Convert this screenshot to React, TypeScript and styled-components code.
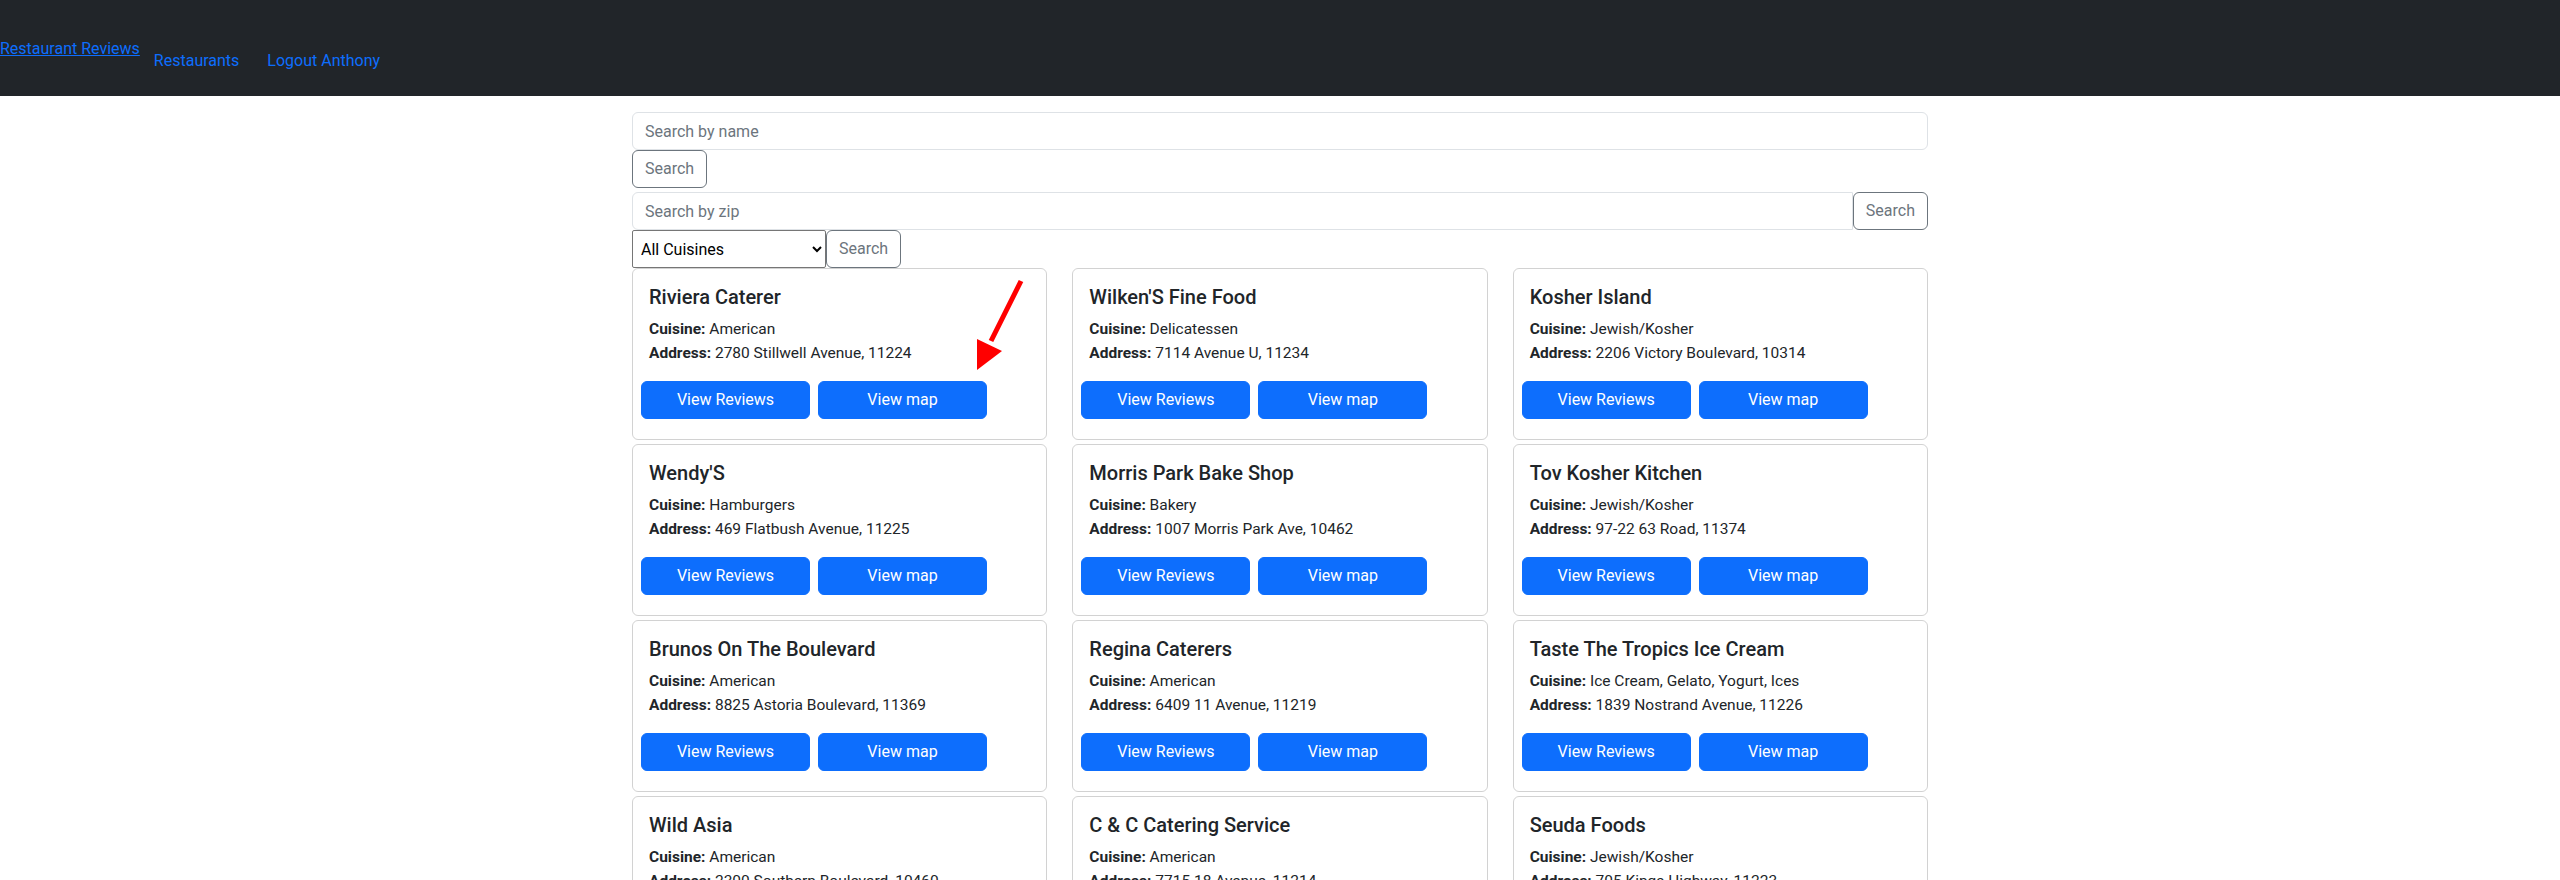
import React from "react";
import styled, { createGlobalStyle } from "styled-components";

const GlobalStyle = createGlobalStyle`
  * { box-sizing: border-box; }
  body {
    margin: 0;
    background: #fff;
    color: #212529;
    font-family: Roboto, "Liberation Sans", Arial, sans-serif;
    font-size: 16px;
    line-height: 1.5;
  }
`;

const Navbar = styled.nav`
  display: flex;
  align-items: flex-start;
  height: 96px;
  padding-top: 37px;
  background: #212529;
`;

const Brand = styled.a`
  color: #0d6efd;
  text-decoration: underline;
  line-height: 24px;
`;

const NavList = styled.div`
  display: flex;
  padding-top: 12px;
`;

const NavLink = styled.a`
  color: #0d6efd;
  text-decoration: none;
  line-height: 24px;
  padding: 0 14px;
`;

const Container = styled.main`
  width: 1320px;
  margin: 0 auto;
  padding: 16px 12px 0;
`;

const Input = styled.input<{ $joined?: boolean }>`
  display: block;
  width: 100%;
  height: 38px;
  padding: 6px 12px;
  font: inherit;
  color: #212529;
  border: 1px solid #dee2e6;
  border-radius: ${(p) => (p.$joined ? "6px 0 0 6px" : "6px")};
  &::placeholder { color: #6c757d; }
`;

const OutlineButton = styled.button`
  height: 38px;
  padding: 6px 12px;
  font: inherit;
  color: #6c757d;
  background: transparent;
  border: 1px solid #6c757d;
  border-radius: 6px;
  flex: none;
`;

const NameSearch = styled.div`
  margin-bottom: 4px;
`;

const InputGroup = styled.div`
  display: flex;
`;

const Select = styled.select`
  width: 194px;
  height: 38px;
  padding: 0 4px;
  font: inherit;
  color: #000;
  background: #fff;
  border: 1px solid #767676;
  border-radius: 2px;
`;

const Grid = styled.div`
  display: grid;
  grid-template-columns: repeat(3, 1fr);
  column-gap: 25px;
  row-gap: 4px;
`;

const Card = styled.div`
  position: relative;
  border: 1px solid rgba(0, 0, 0, 0.175);
  border-radius: 6px;
  padding: 16px 16px 20px;
`;

const Title = styled.h5`
  margin: 0 0 8px;
  font-size: 20px;
  font-weight: 500;
  line-height: 1.2;
`;

const Info = styled.p`
  margin: 0 0 16px;
  font-size: 15.5px;
  line-height: 24px;
`;

const Actions = styled.div`
  display: flex;
  gap: 8px;
  margin-left: -8px;
`;

const PrimaryButton = styled.button`
  width: 169px;
  height: 38px;
  font: inherit;
  color: #fff;
  background: #0d6efd;
  border: 1px solid #0d6efd;
  border-radius: 6px;
`;

const Arrow = styled.svg`
  position: absolute;
  left: 330px;
  top: 0;
  pointer-events: none;
`;

const restaurants = [
  ["Riviera Caterer", "American", "2780 Stillwell Avenue, 11224"],
  ["Wilken'S Fine Food", "Delicatessen", "7114 Avenue U, 11234"],
  ["Kosher Island", "Jewish/Kosher", "2206 Victory Boulevard, 10314"],
  ["Wendy'S", "Hamburgers", "469 Flatbush Avenue, 11225"],
  ["Morris Park Bake Shop", "Bakery", "1007 Morris Park Ave, 10462"],
  ["Tov Kosher Kitchen", "Jewish/Kosher", "97-22 63 Road, 11374"],
  ["Brunos On The Boulevard", "American", "8825 Astoria Boulevard, 11369"],
  ["Regina Caterers", "American", "6409 11 Avenue, 11219"],
  ["Taste The Tropics Ice Cream", "Ice Cream, Gelato, Yogurt, Ices", "1839 Nostrand Avenue, 11226"],
  ["Wild Asia", "American", "2300 Southern Boulevard, 10460"],
  ["C & C Catering Service", "American", "7715 18 Avenue, 11214"],
  ["Seuda Foods", "Jewish/Kosher", "705 Kings Highway, 11223"],
];

export default function App() {
  return (
    <>
      <GlobalStyle />
      <Navbar>
        <Brand href="#">Restaurant Reviews</Brand>
        <NavList>
          <NavLink href="#">Restaurants</NavLink>
          <NavLink href="#">Logout Anthony</NavLink>
        </NavList>
      </Navbar>
      <Container>
        <NameSearch>
          <Input placeholder="Search by name" />
          <OutlineButton>Search</OutlineButton>
        </NameSearch>
        <InputGroup>
          <Input $joined placeholder="Search by zip" />
          <OutlineButton>Search</OutlineButton>
        </InputGroup>
        <InputGroup>
          <Select defaultValue="All Cuisines">
            <option>All Cuisines</option>
          </Select>
          <OutlineButton>Search</OutlineButton>
        </InputGroup>
        <Grid>
          {restaurants.map(([name, cuisine, address], i) => (
            <Card key={name}>
              <Title>{name}</Title>
              <Info>
                <strong>Cuisine:</strong> {cuisine}
                <br />
                <strong>Address:</strong> {address}
              </Info>
              <Actions>
                <PrimaryButton>View Reviews</PrimaryButton>
                <PrimaryButton>View map</PrimaryButton>
              </Actions>
              {i === 0 && (
                <Arrow width="70" height="110" viewBox="330 0 70 110">
                  <line x1="388" y1="12" x2="358" y2="72" stroke="#ff0000" strokeWidth="5" />
                  <polygon points="344,70 369,82 344,101" fill="#ff0000" />
                </Arrow>
              )}
            </Card>
          ))}
        </Grid>
      </Container>
    </>
  );
}
